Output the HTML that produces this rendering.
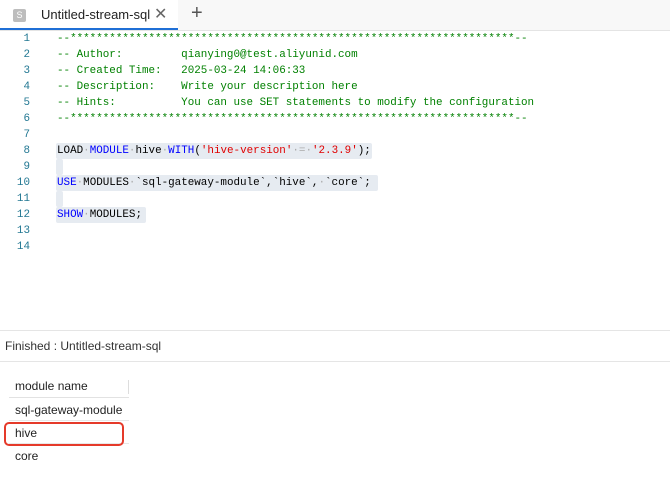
<!DOCTYPE html>
<html><head><style>
body{margin:0;width:670px;height:487px;background:#fff;font-family:"Liberation Sans",sans-serif;position:relative;overflow:hidden}
.tabbar{position:absolute;left:0;top:0;width:670px;height:30px;background:#f8f8f8;border-bottom:1px solid #e4e4e4}
.tab{position:absolute;left:0;top:0;width:178px;height:30px;background:#fff;border-bottom:2px solid #1f6fd6;box-sizing:border-box}
.ico{position:absolute;left:13px;top:9px;width:13px;height:13px;background:#bdbdbd;border-radius:2px;color:#fff;font-size:9px;text-align:center;line-height:13px}
.tt{position:absolute;left:41px;top:7px;font-size:13px;color:#222}
.x{position:absolute;left:154px;top:4px;font-size:16px;color:#666}
.plus{position:absolute;left:191px;top:2px;font-size:20px;color:#555}
.code{position:absolute;left:0;top:31px;font-family:"Liberation Mono",monospace;font-size:10.9px}
.l{position:absolute;height:16px;line-height:16px;white-space:pre}
.n{position:absolute;width:30px;text-align:right;color:#237893;height:16px;line-height:16px}
.c{color:#008000}.k{color:#0000ff}.s{color:#e00000}.d{color:#aaa}
.hl{position:absolute;background:#e6ebf1;border-radius:2px}
.fin{position:absolute;left:0;top:330px;width:670px;height:32px;border-top:1px solid #e5e5e5;border-bottom:1px solid #e5e5e5;box-sizing:border-box;font-size:12px;color:#333;line-height:30px;padding-left:5px}
.t{position:absolute;font-size:12px;color:#222}
</style></head><body>
<div class="tabbar"><div class="tab"><div class="ico">S</div><div class="tt">Untitled-stream-sql</div><div class="x">✕</div></div><div class="plus">+</div></div>
<div class="hl" style="left:56px;top:143px;width:316px;height:16px"></div>
<div class="hl" style="left:56px;top:159px;width:7px;height:16px"></div>
<div class="hl" style="left:56px;top:175px;width:322px;height:16px"></div>
<div class="hl" style="left:56px;top:191px;width:7px;height:16px"></div>
<div class="hl" style="left:56px;top:207px;width:90px;height:16px"></div>
<div class="code">
<div class="n" style="top:0">1</div><div class="n" style="top:16px">2</div><div class="n" style="top:32px">3</div><div class="n" style="top:48px">4</div><div class="n" style="top:64px">5</div><div class="n" style="top:80px">6</div><div class="n" style="top:96px">7</div><div class="n" style="top:112px">8</div><div class="n" style="top:128px">9</div><div class="n" style="top:144px">10</div><div class="n" style="top:160px">11</div><div class="n" style="top:176px">12</div><div class="n" style="top:192px">13</div><div class="n" style="top:208px">14</div>
<div class="l c" style="left:57px;top:0">--********************************************************************--</div>
<div class="l c" style="left:57px;top:16px">-- Author:         qianying0@test.aliyunid.com</div>
<div class="l c" style="left:57px;top:32px">-- Created Time:   2025-03-24 14:06:33</div>
<div class="l c" style="left:57px;top:48px">-- Description:    Write your description here</div>
<div class="l c" style="left:57px;top:64px">-- Hints:          You can use SET statements to modify the configuration</div>
<div class="l c" style="left:57px;top:80px">--********************************************************************--</div>
<div class="l" style="left:57px;top:112px">LOAD<span class="d">·</span><span class="k">MODULE</span><span class="d">·</span>hive<span class="d">·</span><span class="k">WITH</span>(<span class="s">'hive-version'</span><span class="d">·=·</span><span class="s">'2.3.9'</span>);</div>
<div class="l" style="left:57px;top:144px"><span class="k">USE</span><span class="d">·</span>MODULES<span class="d">·</span>`sql-gateway-module`,`hive`,<span class="d">·</span>`core`;</div>
<div class="l" style="left:57px;top:176px"><span class="k">SHOW</span><span class="d">·</span>MODULES;</div>
</div>
<div class="fin">Finished : Untitled-stream-sql</div>
<div style="position:absolute;left:128px;top:380px;width:1px;height:14px;background:#ddd"></div>
<div class="t" style="left:15px;top:379px">module name</div>
<div style="position:absolute;left:9px;top:397px;width:120px;height:1px;background:#e2e2e2"></div>
<div class="t" style="left:15px;top:403px">sql-gateway-module</div>
<div style="position:absolute;left:9px;top:420px;width:120px;height:1px;background:#e8e8e8"></div>
<div class="t" style="left:15px;top:426px">hive</div>
<div style="position:absolute;left:9px;top:443px;width:120px;height:1px;background:#e8e8e8"></div>
<div class="t" style="left:15px;top:449px">core</div>
<div style="position:absolute;left:4px;top:422px;width:116px;height:20px;border:2.5px solid #e53a2a;border-radius:5px"></div>
</body></html>
